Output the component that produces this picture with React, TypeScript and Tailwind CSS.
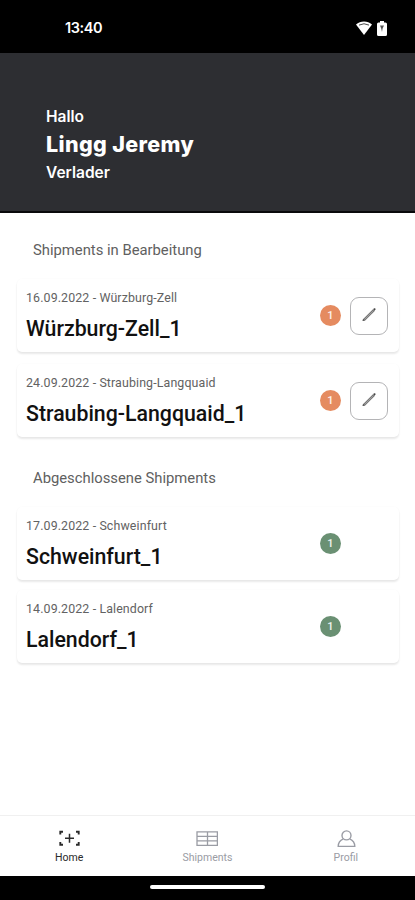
import type { ReactNode } from "react";

type Shipment = {
  date: string;
  place: string;
  count: number;
};

const openShipments: Shipment[] = [
  { date: "16.09.2022", place: "Würzburg-Zell", count: 1 },
  { date: "24.09.2022", place: "Straubing-Langquaid", count: 1 },
];

const closedShipments: Shipment[] = [
  { date: "17.09.2022", place: "Schweinfurt", count: 1 },
  { date: "14.09.2022", place: "Lalendorf", count: 1 },
];

function StatusBar() {
  return (
    <div className="flex h-[53px] shrink-0 items-center bg-black pt-[3px] pr-[28px] pl-[65px] text-white">
      <span className="font-['Inter',sans-serif] text-[14.5px] font-semibold tracking-[-0.4px]">
        13:40
      </span>
      <div className="ml-auto flex items-center gap-[5px]">
        <svg width="16" height="14" viewBox="0 0 16 14">
          <path d="M0 3.6C4.4-.5 11.6-.5 16 3.6L8 14Z" fill="#fff" />
          <path d="M3 4.1Q8 1.4 13 4.1" fill="none" stroke="#333" strokeWidth="0.9" />
        </svg>
        <svg width="10" height="15" viewBox="0 0 10 15">
          <path
            d="M3 0h4v1.4h1.5Q10 1.4 10 2.9v10.6Q10 15 8.5 15h-7Q0 15 0 13.5V2.9Q0 1.4 1.5 1.4H3Z"
            fill="#fff"
          />
          <path d="M3 4.6h4L5.6 7.6 5 11 4.2 7.4Z" fill="#555" />
        </svg>
      </div>
    </div>
  );
}

function Header() {
  return (
    <header className="flex h-40 shrink-0 flex-col border-b-2 border-[#09090b] bg-[#2d2e32] pt-[54px] pl-[46px] font-['Inter',sans-serif] text-white">
      <p className="text-[15.5px] leading-5 font-semibold">Hallo</p>
      <h1 className="mt-[3px] text-[21.5px] leading-7 font-extrabold tracking-[0.35px]">
        Lingg Jeremy
      </h1>
      <p className="mt-[5px] text-[15.5px] leading-5 font-semibold">
        Verlader
      </p>
    </header>
  );
}

function ShipmentCard({
  shipment,
  editable,
}: {
  shipment: Shipment;
  editable?: boolean;
}) {
  return (
    <article className="flex h-[73px] items-center rounded-[5px] bg-white pr-[11px] pl-[9px] shadow-[0_2px_2px_rgba(0,0,0,0.09),0_0_2px_rgba(0,0,0,0.03)]">
      <div className="flex-1 pt-px">
        <p className="text-[12.4px] leading-4 tracking-[0.12px] text-[#626262]">
          {shipment.date} - {shipment.place}
        </p>
        <h3 className="mt-[9px] text-[21.3px] leading-7 font-medium text-[#111]">
          {shipment.place}_1
        </h3>
      </div>
      <span
        className={
          editable
            ? "flex size-[21px] items-center justify-center rounded-full bg-[#e58b60] pt-px text-[11px] font-medium text-white/90"
            : "flex size-[21px] items-center justify-center rounded-full bg-[#6a9073] pt-px text-[11px] font-medium text-white/90"
        }
      >
        {shipment.count}
      </span>
      <div className="ml-[9px] size-[38px]">
        {editable && (
          <button
            type="button"
            aria-label="Bearbeiten"
            className="flex size-full items-center justify-center rounded-[9px] border border-[#b4b4b6]"
          >
            <svg width="16" height="16" viewBox="0 0 16 16" className="-mt-0.5">
              <path d="M2.8 13.2 13.1 2.9" stroke="#777" strokeWidth="2.5" />
              <path d="m3.6 12.4 8.6-8.6" stroke="#aaa" strokeWidth="0.8" />
              <path d="m12.3 2.1.8-.8q.6-.4 1.2.2t.1 1.2l-.8.8Z" fill="#444" />
              <path d="m1.5 14.1.5-2.1 1.6 1.5Z" fill="#333" />
            </svg>
          </button>
        )}
      </div>
    </article>
  );
}

function NavItem({
  label,
  active,
  children,
}: {
  label: string;
  active?: boolean;
  children: ReactNode;
}) {
  return (
    <button
      type="button"
      className={
        active
          ? "flex flex-1 flex-col items-center pt-[14px] text-[#2a2a2a]"
          : "flex flex-1 flex-col items-center pt-[14px] text-[#9a9ca4]"
      }
    >
      {children}
      <span className="mt-1 text-[10.5px] leading-3">{label}</span>
    </button>
  );
}

function BottomNav() {
  return (
    <nav className="flex h-[61px] shrink-0 border-t border-[#f0f0f0] bg-white">
      <NavItem label="Home" active>
        <svg width="22" height="18" viewBox="0 0 22 18" fill="none" stroke="currentColor">
          <path
            d="M2.3 4.5V1.7H5M18 1.7h2.7V4.5M20.7 12v2.8H18M5 14.8H2.3V12"
            strokeWidth="1.9"
          />
          <path d="M7 8.3h9M11.5 3.8v9" strokeWidth="1.5" />
        </svg>
      </NavItem>
      <NavItem label="Shipments">
        <svg width="22" height="18" viewBox="0 0 22 18" fill="none" stroke="currentColor" strokeWidth="1.3">
          <path d="M1 1.8h20.4v13.6H1ZM11.5 1.8v13.6M1 6.3h20.4M1 10.8h20.4" />
        </svg>
      </NavItem>
      <NavItem label="Profil">
        <svg width="22" height="18" viewBox="0 0 22 18" fill="none" stroke="currentColor" strokeWidth="1.4">
          <circle cx="11.5" cy="5.4" r="4.5" />
          <path d="M8.3 8.8Q3.2 11 3.2 16.4h16.6Q19.8 11 14.7 8.8" />
        </svg>
      </NavItem>
    </nav>
  );
}

export default function App() {
  return (
    <div className="flex h-[900px] w-[415px] flex-col overflow-hidden bg-white font-['Roboto',sans-serif]">
      <StatusBar />
      <Header />
      <main className="flex-1 pt-[27px] pr-4 pl-[17px]">
        <h2 className="pl-4 text-[14.8px] leading-5 text-[#606060]">
          Shipments in Bearbeitung
        </h2>
        <div className="mt-[19px] flex flex-col gap-3">
          {openShipments.map((shipment) => (
            <ShipmentCard key={shipment.place} shipment={shipment} editable />
          ))}
        </div>
        <h2 className="mt-[31px] pl-4 text-[14.8px] leading-5 text-[#606060]">
          Abgeschlossene Shipments
        </h2>
        <div className="mt-[19px] flex flex-col gap-2.5">
          {closedShipments.map((shipment) => (
            <ShipmentCard key={shipment.place} shipment={shipment} />
          ))}
        </div>
      </main>
      <BottomNav />
      <div className="flex h-6 shrink-0 justify-center bg-black pt-[9px]">
        <div className="h-1 w-[115px] rounded-full bg-white" />
      </div>
    </div>
  );
}
